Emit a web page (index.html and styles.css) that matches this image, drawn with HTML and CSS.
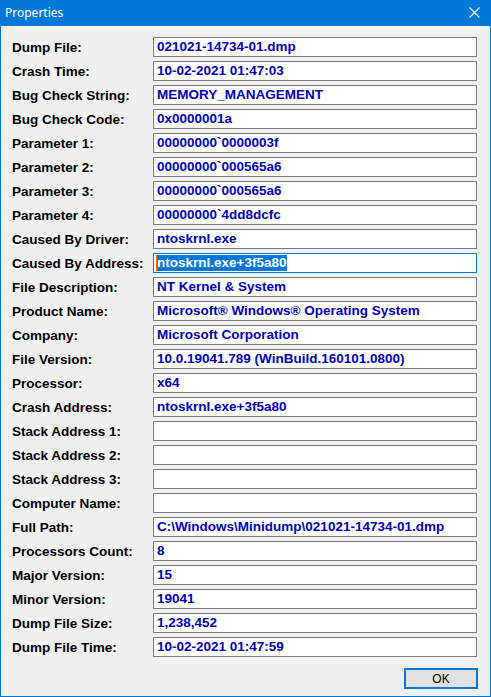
FILE: index.html
```html
<!DOCTYPE html>
<html>
<head>
<meta charset="utf-8">
<link rel="stylesheet" href="styles.css">
</head>
<body>
<div class="window">
  <div class="titlebar">
    <span class="title">Properties</span>
    <svg class="close" width="11" height="11" viewBox="0 0 11 11"><path d="M0.5 0.5L10.5 10.5M10.5 0.5L0.5 10.5" stroke="#fff" stroke-width="1.1" fill="none"/></svg>
  </div>
  <div class="content">
    <div class="grid">
      <div class="label">Dump File:</div><div class="field">021021-14734-01.dmp</div>
      <div class="label">Crash Time:</div><div class="field">10-02-2021 01:47:03</div>
      <div class="label">Bug Check String:</div><div class="field">MEMORY_MANAGEMENT</div>
      <div class="label">Bug Check Code:</div><div class="field">0x0000001a</div>
      <div class="label">Parameter 1:</div><div class="field">00000000`0000003f</div>
      <div class="label">Parameter 2:</div><div class="field">00000000`000565a6</div>
      <div class="label">Parameter 3:</div><div class="field">00000000`000565a6</div>
      <div class="label">Parameter 4:</div><div class="field">00000000`4dd8dcfc</div>
      <div class="label">Caused By Driver:</div><div class="field">ntoskrnl.exe</div>
      <div class="label">Caused By Address:</div><div class="field focused"><span class="caret"></span><span class="sel">ntoskrnl.exe+3f5a80</span></div>
      <div class="label">File Description:</div><div class="field">NT Kernel &amp; System</div>
      <div class="label">Product Name:</div><div class="field">Microsoft® Windows® Operating System</div>
      <div class="label">Company:</div><div class="field">Microsoft Corporation</div>
      <div class="label">File Version:</div><div class="field">10.0.19041.789 (WinBuild.160101.0800)</div>
      <div class="label">Processor:</div><div class="field">x64</div>
      <div class="label">Crash Address:</div><div class="field">ntoskrnl.exe+3f5a80</div>
      <div class="label">Stack Address 1:</div><div class="field"></div>
      <div class="label">Stack Address 2:</div><div class="field"></div>
      <div class="label">Stack Address 3:</div><div class="field"></div>
      <div class="label">Computer Name:</div><div class="field"></div>
      <div class="label">Full Path:</div><div class="field">C:\Windows\Minidump\021021-14734-01.dmp</div>
      <div class="label">Processors Count:</div><div class="field">8</div>
      <div class="label">Major Version:</div><div class="field">15</div>
      <div class="label">Minor Version:</div><div class="field">19041</div>
      <div class="label">Dump File Size:</div><div class="field">1,238,452</div>
      <div class="label">Dump File Time:</div><div class="field">10-02-2021 01:47:59</div>
    </div>
    <div class="buttons">
      <button class="ok">OK</button>
    </div>
  </div>
</div>
</body>
</html>
```

FILE: styles.css
```css
html, body {
  margin: 0;
  padding: 0;
  background: #f0f0f0;
}
.window {
  box-sizing: border-box;
  width: 491px;
  height: 697px;
  border: 1px solid #0078d7;
  border-top: none;
  background: #f0f0f0;
  display: flex;
  flex-direction: column;
}
.titlebar {
  height: 26px;
  margin: 0 -1px;
  background: #0078d7;
  display: flex;
  align-items: center;
  justify-content: space-between;
  padding: 0 11px 0 5px;
  box-sizing: border-box;
}
.title {
  color: #fff;
  font-family: "Noto Sans", "Open Sans", sans-serif;
  font-size: 12px;
  line-height: 16px;
  margin-top: -1px;
}
.close {
  display: block;
  margin-top: -2px;
}
.content {
  padding: 11px 12px 0 11px;
  display: flex;
  flex-direction: column;
}
.grid {
  display: grid;
  grid-template-columns: 141px 324px;
  grid-auto-rows: 20px;
  row-gap: 4px;
}
.label {
  font-family: "Liberation Sans", Arial, sans-serif;
  font-weight: bold;
  font-size: 13.5px;
  color: #000;
  line-height: 20px;
  padding-top: 1px;
  box-sizing: border-box;
  white-space: nowrap;
}
.field {
  box-sizing: border-box;
  height: 20px;
  border: 1px solid #7a7a7a;
  background: #fff;
  font-family: "Liberation Sans", Arial, sans-serif;
  font-weight: bold;
  font-size: 13.5px;
  color: #0000b8;
  line-height: 18px;
  padding-left: 3px;
  white-space: nowrap;
  overflow: hidden;
  display: flex;
  align-items: center;
}
.field.focused {
  border-color: #0078d7;
  padding-left: 2px;
}
.caret {
  width: 1px;
  height: 16px;
  background: #e8741c;
}
.sel {
  background: #0078d7;
  color: #fff;
  line-height: 16px;
  height: 16px;
  padding-right: 1px;
}
.buttons {
  display: flex;
  justify-content: flex-end;
  margin-top: 11px;
}
.ok {
  box-sizing: border-box;
  width: 74px;
  height: 21px;
  border: 2px solid #0078d7;
  background: #e1e1e1;
  font-family: "Liberation Sans", Arial, sans-serif;
  font-size: 12px;
  color: #000;
  padding: 0;
  margin: 0;
}
```
